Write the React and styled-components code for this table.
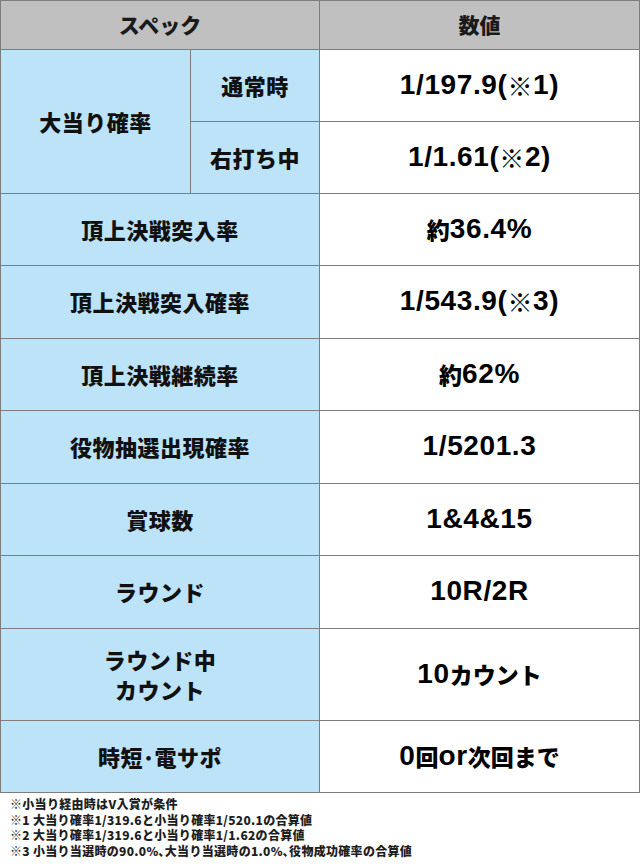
import React from 'react';
import styled, { createGlobalStyle } from 'styled-components';

const GlobalStyle = createGlobalStyle`
  * { box-sizing: border-box; }
  body {
    margin: 0;
    background: #fff;
    font-family: "Noto Sans CJK JP", "Noto Sans", sans-serif;
  }
`;

const jpFont = '"Noto Sans CJK JP", "Noto Sans", sans-serif';
const numFont = '"Liberation Sans", Arial, "Noto Sans CJK JP", sans-serif';
const line = '#7d7d7d';

const Page = styled.div`
  width: 640px;
`;

const Table = styled.div`
  display: grid;
  grid-template-columns: 190px 129px 1fr;
  grid-template-rows: 49px 72px 72px 72px 73px 72px 73px 72px 73px 92px 72px;
  border-top: 1px solid ${line};
  border-left: 1px solid ${line};
  width: 640px;
`;

const Cell = styled.div`
  display: flex;
  align-items: center;
  justify-content: center;
  text-align: center;
  border-right: 1px solid ${line};
  border-bottom: 1px solid ${line};
  grid-column: ${props => props.col || 'auto'};
  grid-row: ${props => props.row || 'auto'};
`;

const HeadCell = styled(Cell)`
  background: #c0c0c0;
  color: #1a1a1a;
  font-family: ${jpFont};
  font-weight: 900;
  font-size: 21px;
  padding-bottom: 2px;
`;

const LabelCell = styled(Cell)`
  background: #bde3f8;
  color: #111;
  font-family: ${jpFont};
  font-weight: 900;
  font-size: 22px;
  letter-spacing: 0.5px;
  line-height: 30px;
  padding-bottom: 2px;
`;

const ValueCell = styled(Cell)`
  background: #fff;
  color: #000;
  font-family: ${numFont};
  font-weight: 700;
  font-size: 28px;
  letter-spacing: 0.6px;
  padding-bottom: 2px;
`;

const Jp = styled.span`
  font-family: ${jpFont};
  font-weight: 900;
  font-size: 23px;
  letter-spacing: 0;
`;

const Mark = styled.span`
  font-family: ${jpFont};
  font-weight: 300;
  font-size: 25px;
`;

const Notes = styled.div`
  padding: 3px 0 0 10px;
  font-family: ${jpFont};
  font-weight: 900;
  font-size: 12px;
  line-height: 15.5px;
  letter-spacing: 0.3px;
  color: #1e1e1e;
`;

const Note = styled.p`
  margin: 0;
  white-space: nowrap;
`;

const rows = [
  { label: '頂上決戦突入率', value: <><Jp>約</Jp>36.4%</> },
  { label: '頂上決戦突入確率', value: <>1/543.9(<Mark>※</Mark>3)</> },
  { label: '頂上決戦継続率', value: <><Jp>約</Jp>62%</> },
  { label: '役物抽選出現確率', value: '1/5201.3' },
  { label: '賞球数', value: '1&4&15' },
  { label: 'ラウンド', value: '10R/2R' },
  { label: <>ラウンド中<br />カウント</>, value: <>10<Jp>カウント</Jp></> },
  { label: '時短･電サポ', value: <>0<Jp>回</Jp>or<Jp>次回まで</Jp></> },
];

const notes = [
  '※小当り経由時はV入賞が条件',
  '※1 大当り確率1/319.6と小当り確率1/520.1の合算値',
  '※2 大当り確率1/319.6と小当り確率1/1.62の合算値',
  '※3 小当り当選時の90.0%､大当り当選時の1.0%､役物成功確率の合算値',
];

const App = () => (
  <Page>
    <GlobalStyle />
    <Table>
      <HeadCell col="1 / 3" row="1">スペック</HeadCell>
      <HeadCell col="3" row="1">数値</HeadCell>

      <LabelCell col="1" row="2 / 4">大当り確率</LabelCell>
      <LabelCell col="2" row="2">通常時</LabelCell>
      <ValueCell col="3" row="2">1/197.9(<Mark>※</Mark>1)</ValueCell>
      <LabelCell col="2" row="3">右打ち中</LabelCell>
      <ValueCell col="3" row="3">1/1.61(<Mark>※</Mark>2)</ValueCell>

      {rows.map((r, i) => (
        <React.Fragment key={i}>
          <LabelCell col="1 / 3" row={i + 4}>{r.label}</LabelCell>
          <ValueCell col="3" row={i + 4}>{r.value}</ValueCell>
        </React.Fragment>
      ))}
    </Table>
    <Notes>
      {notes.map(n => <Note key={n}>{n}</Note>)}
    </Notes>
  </Page>
);

export default App;
